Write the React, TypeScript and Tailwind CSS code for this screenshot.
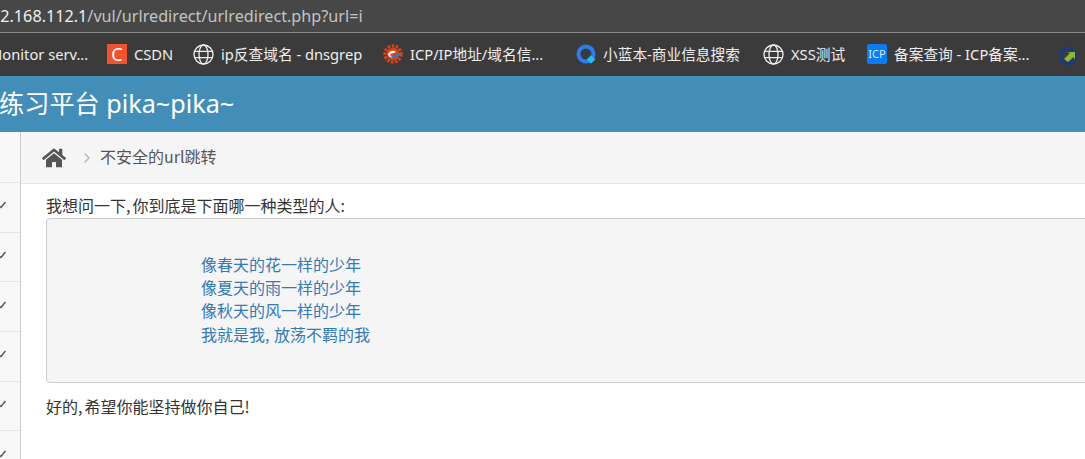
import React from 'react';
import { ChevronRight } from 'lucide-react';
import { FaHome } from 'react-icons/fa';

const UI_FONT = "font-['Noto_Sans','Noto_Sans_CJK_SC',sans-serif]";

const GlobeIcon = () => (
  <svg width="21" height="21" viewBox="0 0 21 21" fill="none" stroke="#f0f0f0" strokeWidth="1.300" className="shrink-0">
    <circle cx="10.500" cy="10.500" r="9.500" />
    <ellipse cx="10.500" cy="10.500" rx="4.500" ry="9.500" />
    <path d="M2 7.300h17M2 13.700h17" />
  </svg>
);

const GearIcon = () => (
  <svg width="20" height="20" viewBox="0 0 20 20" className="shrink-0">
    <circle cx="10" cy="10" r="8" fill="none" stroke="#d8431a" strokeWidth="3.4" strokeDasharray="2.6 1.4" />
    <circle cx="10" cy="10" r="6.2" fill="#d8431a" />
    <path d="M5 10.5c1-4 6-5 8-2.500-2 1-4 1.500-6 2 1 2.500 4 3 7 .5-1 3.500-8 4.500-9 0z" fill="#fff" />
    <path d="M7 11.500c3 0 8-1 12-3.500-1 3-5 6-9 6z" fill="#2a7fb8" />
  </svg>
);

const QIcon = () => (
  <svg width="20" height="20" viewBox="0 0 20 20" className="shrink-0">
    <circle cx="10" cy="10" r="7.500" fill="none" stroke="#2f7bf0" strokeWidth="4" />
    <rect x="12" y="12.500" width="6" height="6" fill="#19c4e6" transform="rotate(45 15 15.500)" />
  </svg>
);

const LinkIcon = () => (
  <svg width="20" height="20" viewBox="0 0 20 20" className="shrink-0">
    <circle cx="10" cy="11" r="7.500" fill="none" stroke="#1c3a78" strokeWidth="3.500" />
    <path d="M6 14l6-6-3-1h8v8l-1.500-3-5.500 5z" fill="#8fb53a" />
  </svg>
);

const Bookmark = ({ icon, label, className }: { icon: React.ReactNode; label: string; className: string }) => (
  <div className={`flex items-center gap-[7px] shrink-0 ${className}`}>
    {icon}
    <span className="whitespace-nowrap text-[14.7px] text-[#eeeeee]">{label}</span>
  </div>
);

const SideRow = () => (
  <div className="h-[49.700px] border-b border-[#e5e5e5] flex items-center overflow-hidden">
    <svg width="6" height="8" viewBox="0 0 6 8" className="shrink-0 -mt-[4px]">
      <path d="M0 5.500 L1 6.500 L5.500 1" fill="none" stroke="#4a5560" strokeWidth="1.500" />
    </svg>
  </div>
);

export default function App() {
  return (
    <div className="w-[1085px] h-[459px] overflow-hidden bg-white flex flex-col font-['Noto_Sans_CJK_SC',sans-serif]">
      {/* browser chrome */}
      <div className={`h-[33px] bg-[#474747] border-b border-[#8a8a8a] flex items-center overflow-hidden ${UI_FONT}`}>
        <span className="-ml-[9px] whitespace-nowrap text-[16.200px] text-[#f0f0f0]">
          92.168.112.1<span className="text-[#c4c4c4]">/vul/urlredirect/urlredirect.php?url=i</span>
        </span>
      </div>
      <div className={`h-[43px] bg-[#3b3b3b] flex items-center overflow-hidden ${UI_FONT}`}>
        <span className="-ml-[11px] w-[118px] shrink-0 whitespace-nowrap text-[14.7px] text-[#eeeeee]">Monitor serv...</span>
        <Bookmark
          className="w-[86px]"
          label="CSDN"
          icon={<div className="w-5 h-5 bg-[#f2532c] text-white text-[18px] leading-5 text-center">C</div>}
        />
        <Bookmark className="w-[190px]" label="ip反查域名 - dnsgrep" icon={<GlobeIcon />} />
        <Bookmark className="w-[193px]" label="ICP/IP地址/域名信..." icon={<GearIcon />} />
        <Bookmark className="w-[187px]" label="小蓝本-商业信息搜索" icon={<QIcon />} />
        <Bookmark className="w-[104px]" label="XSS测试" icon={<GlobeIcon />} />
        <Bookmark
          className="w-[191px]"
          label="备案查询 - ICP备案..."
          icon={<div className="w-5 h-5 rounded-[2px] bg-[#0a7cf5] text-[#d8ecff] text-[11px] leading-5 text-center">ICP</div>}
        />
        <LinkIcon />
      </div>

      {/* page header */}
      <div className="h-[56px] bg-[#438eb9] flex items-center overflow-hidden shrink-0">
        <span className={`-ml-[1px] whitespace-nowrap text-[25.200px] text-white ${UI_FONT}`}>练习平台 pika~pika~</span>
      </div>

      <div className="flex flex-1 min-h-0">
        {/* sidebar, cut off by the crop */}
        <div className="w-[21px] shrink-0 bg-[#f8f8f8] border-r border-[#cccccc]">
          <div className="h-[51px] border-b border-[#e5e5e5]" />
          <SideRow />
          <SideRow />
          <SideRow />
          <SideRow />
          <SideRow />
          <SideRow />
        </div>

        <div className="flex-1 min-w-0">
          <div className="h-[52px] bg-[#f5f5f5] border-b border-[#e5e5e5] flex items-center pl-[21px]">
            <FaHome size={24} color="#555555" />
            <ChevronRight size={16} color="#b0b4bb" strokeWidth={2} className="ml-[13px]" />
            <span className="ml-[5px] -mt-[3px] text-[16px] text-[#555555]">不安全的url跳转</span>
          </div>
          <div className="pl-[25px] pt-[11px] text-[16px] leading-[21px] text-[#333333]">
            <p>我想问一下<span className="pr-[2px]">,</span>你到底是下面哪一种类型的人<span className="pr-[2px]">:</span></p>
            <div className="mt-[2px] -mr-[20px] h-[165px] bg-[#f5f5f5] border border-[#cccccc] rounded-[4px] pl-[154px] pt-[34px]">
              <a className="block h-[23.200px] text-[16px] leading-[23px] text-[#337ab7]">像春天的花一样的少年</a>
              <a className="block h-[23.200px] text-[16px] leading-[23px] text-[#337ab7]">像夏天的雨一样的少年</a>
              <a className="block h-[23.200px] text-[16px] leading-[23px] text-[#337ab7]">像秋天的风一样的少年</a>
              <a className="block h-[23.200px] text-[16px] leading-[23px] text-[#337ab7]">我就是我<span className="pr-[4.500px]">,</span>放荡不羁的我</a>
            </div>
            <p className="mt-[13px]">好的<span className="pr-[2px]">,</span>希望你能坚持做你自己!</p>
          </div>
        </div>
      </div>
    </div>
  );
}
